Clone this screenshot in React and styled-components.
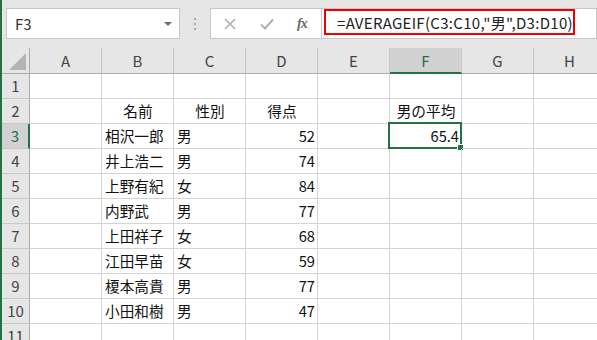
import React from "react";
import styled, { createGlobalStyle, css } from "styled-components";

const GlobalStyle = createGlobalStyle`
  html, body {
    margin: 0;
    padding: 0;
    background: #fff;
    overflow: hidden;
  }
`;

const FONT = `"Noto Sans CJK JP", "Noto Sans", sans-serif`;
const GREEN = "#217346";

const Window = styled.div`
  width: 597px;
  height: 340px;
  box-sizing: border-box;
  border-left: 2px solid ${GREEN};
  overflow: hidden;
  display: flex;
  flex-direction: column;
  background: #fff;
  font-family: ${FONT};
`;

const FormulaBar = styled.div`
  flex: none;
  height: 48px;
  box-sizing: border-box;
  padding: 8px 0 0 4px;
  background: #e6e6e6;
  display: flex;
  align-items: flex-start;
`;

const NameBox = styled.div`
  width: 174px;
  height: 31px;
  box-sizing: border-box;
  border: 1px solid #c6c6c6;
  background: #fff;
  display: flex;
  align-items: center;
  justify-content: space-between;
  padding: 0 7px 0 8px;
  font-size: 15px;
  color: #333;
`;

const DropArrow = styled.span`
  width: 0;
  height: 0;
  border-left: 4px solid transparent;
  border-right: 4px solid transparent;
  border-top: 4px solid #6d6d6d;
`;

const Grip = styled.div`
  width: 30px;
  height: 31px;
  display: flex;
  flex-direction: column;
  align-items: center;
  justify-content: center;
  gap: 3px;
  span {
    width: 2px;
    height: 2px;
    background: #a8a8a8;
  }
`;

const IconBox = styled.div`
  width: 112px;
  height: 31px;
  box-sizing: border-box;
  border: 1px solid #c6c6c6;
  background: #fff;
  display: flex;
  align-items: center;
  padding-left: 13px;
  gap: 24px;
`;

const Fx = styled.span`
  font-family: "Liberation Serif", serif;
  font-style: italic;
  font-weight: bold;
  font-size: 14px;
  color: #6a6a6a;
  letter-spacing: -1px;
  margin-left: -1px;
`;

const FormulaInput = styled.div`
  flex: 1;
  position: relative;
  height: 31px;
  box-sizing: border-box;
  border: 1px solid #c6c6c6;
  border-left: none;
  background: #fff;
  padding-left: 15px;
  font-size: 15px;
  letter-spacing: 0.3px;
  line-height: 27px;
  color: #222;
  white-space: nowrap;
`;

const Mark = styled.div`
  position: absolute;
  left: 2px;
  top: 0;
  width: 251px;
  height: 26px;
  box-sizing: border-box;
  border: 2px solid #f00000;
`;

const Sheet = styled.div`
  flex: 1;
  display: grid;
  grid-template-columns: 28px repeat(8, 72px);
  grid-template-rows: 26px;
  grid-auto-rows: 25px;
`;

const Cell = styled.div`
  position: relative;
  box-sizing: border-box;
  border-right: 1px solid #d4d4d4;
  border-bottom: 1px solid #d4d4d4;
  font-size: 14.67px;
  line-height: 24px;
  padding: 0 2px 0 3px;
  color: #111;
  white-space: nowrap;
  overflow: visible;
  text-align: ${(p) => p.$align || "left"};
`;

const ColHead = styled.div`
  box-sizing: border-box;
  background: ${(p) => (p.$active ? "#d2d2d2" : "#e6e6e6")};
  border-right: 1px solid #c8c8c8;
  border-bottom: ${(p) => (p.$active ? `2px solid ${GREEN}` : "1px solid #ababab")};
  color: ${(p) => (p.$active ? GREEN : "#444")};
  font-size: 15px;
  line-height: 25px;
  text-align: center;
`;

const Corner = styled.div`
  box-sizing: border-box;
  background: #e6e6e6;
  border-right: 1px solid #ababab;
  border-bottom: 1px solid #ababab;
  display: flex;
  justify-content: flex-end;
  align-items: flex-end;
  padding: 0 3px 3px 0;
  &::after {
    content: "";
    width: 0;
    height: 0;
    border-left: 17px solid transparent;
    border-bottom: 17px solid #b4b4b4;
  }
`;

const RowHead = styled.div`
  box-sizing: border-box;
  background: ${(p) => (p.$active ? "#d2d2d2" : "#e6e6e6")};
  border-bottom: 1px solid #c8c8c8;
  ${(p) =>
    p.$active
      ? css`
          border-right: 2px solid ${GREEN};
          color: ${GREEN};
        `
      : css`
          border-right: 1px solid #ababab;
          color: #444;
        `}
  font-size: 15px;
  line-height: 24px;
  text-align: center;
`;

const Selection = styled.div`
  position: absolute;
  left: -2px;
  top: -2px;
  right: -1px;
  bottom: -1px;
  border: 2px solid ${GREEN};
  &::after {
    content: "";
    position: absolute;
    right: -4px;
    bottom: -4px;
    width: 5px;
    height: 5px;
    background: ${GREEN};
    border: 1px solid #fff;
  }
`;

const Cross = () => (
  <svg width="12" height="12" viewBox="0 0 12 12">
    <path d="M1 1 L11 11 M11 1 L1 11" stroke="#b0b0b0" strokeWidth="1.6" fill="none" />
  </svg>
);

const Check = () => (
  <svg width="14" height="12" viewBox="0 0 14 12">
    <path d="M1 6.5 L5 10.5 L13 1.5" stroke="#b0b0b0" strokeWidth="2" fill="none" />
  </svg>
);

const columns = ["A", "B", "C", "D", "E", "F", "G", "H"];

const people = [
  ["相沢一郎", "男", 52],
  ["井上浩二", "男", 74],
  ["上野有紀", "女", 84],
  ["内野武", "男", 77],
  ["上田祥子", "女", 68],
  ["江田早苗", "女", 59],
  ["榎本高貴", "男", 77],
  ["小田和樹", "男", 47],
];

// row number -> { colIndex: [text, align] }
const cells = {
  2: { 1: ["名前", "center"], 2: ["性別", "center"], 3: ["得点", "center"], 5: ["男の平均", "center"] },
};
people.forEach(([name, sex, score], i) => {
  cells[i + 3] = { 1: [name], 2: [sex], 3: [String(score), "right"] };
});
cells[3][5] = ["65.4", "right"];

export default function App() {
  const rows = Array.from({ length: 11 }, (_, i) => i + 1);
  return (
    <>
      <GlobalStyle />
      <Window>
        <FormulaBar>
          <NameBox>
            F3
            <DropArrow />
          </NameBox>
          <Grip>
            <span />
            <span />
            <span />
          </Grip>
          <IconBox>
            <Cross />
            <Check />
            <Fx>fx</Fx>
          </IconBox>
          <FormulaInput>
            =AVERAGEIF(C3:C10,"男",D3:D10)
            <Mark />
          </FormulaInput>
        </FormulaBar>
        <Sheet>
          <Corner />
          {columns.map((c) => (
            <ColHead key={c} $active={c === "F"}>
              {c}
            </ColHead>
          ))}
          {rows.map((r) => (
            <React.Fragment key={r}>
              <RowHead $active={r === 3}>{r}</RowHead>
              {columns.map((c, ci) => {
                const v = cells[r] && cells[r][ci];
                return (
                  <Cell key={c} $align={v && v[1]}>
                    {v ? v[0] : ""}
                    {r === 3 && c === "F" && <Selection />}
                  </Cell>
                );
              })}
            </React.Fragment>
          ))}
        </Sheet>
      </Window>
    </>
  );
}
